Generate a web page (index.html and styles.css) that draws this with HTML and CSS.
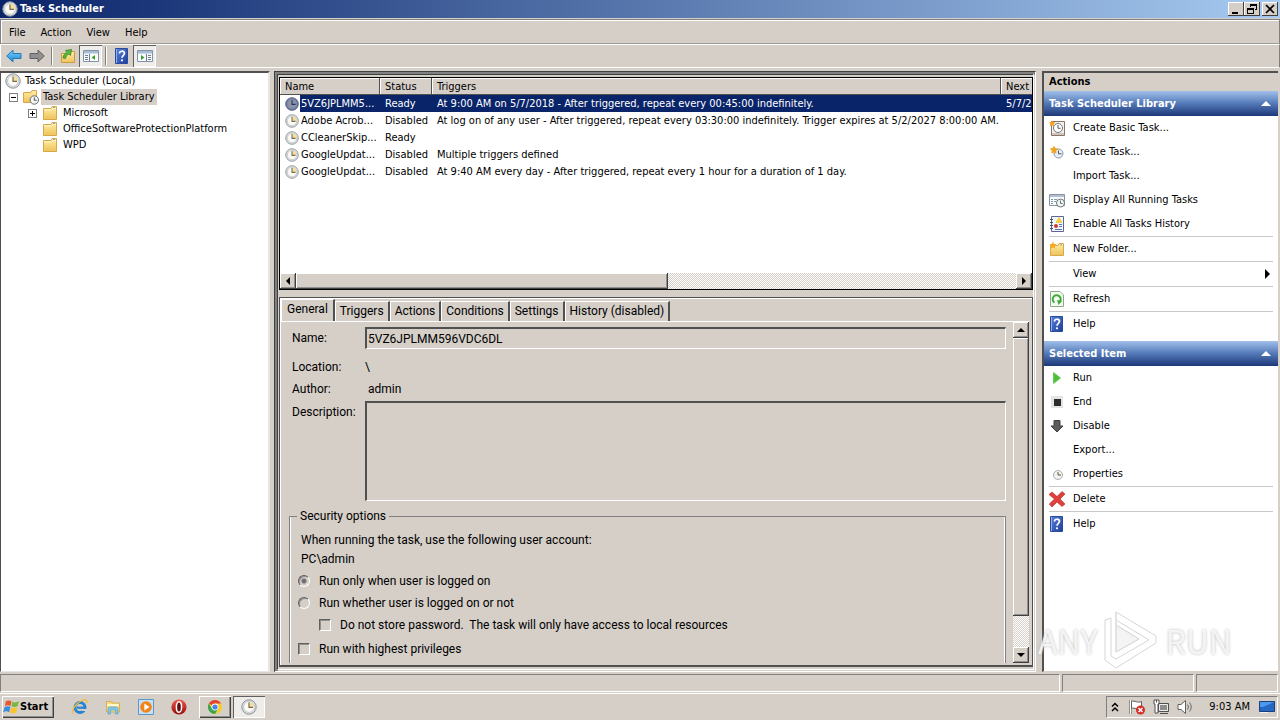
FILE: index.html
```html
<!DOCTYPE html>
<html lang="en">
  <head>
    <title>Task Scheduler</title>
    <meta charset="utf-8"/>
    <meta name="viewport" content="width=device-width, initial-scale=1"/>
    <link rel="stylesheet" href="styles.css">
  </head>
  <body>
    <!-- icon set -->
    <svg class="sprite" aria-hidden="true">
      <defs>
        <linearGradient id="g-folder" x1="0" y1="0" x2="0" y2="1"><stop offset="0" stop-color="#ffeea6"/><stop offset="1" stop-color="#eec35a"/></linearGradient>
        <linearGradient id="g-help" x1="0" y1="0" x2="1" y2="1"><stop offset="0" stop-color="#5b86dc"/><stop offset="1" stop-color="#1c3c9c"/></linearGradient>
        <linearGradient id="g-blue" x1="0" y1="0" x2="0" y2="1"><stop offset="0" stop-color="#7fd0f8"/><stop offset="1" stop-color="#1c86cc"/></linearGradient>
        <linearGradient id="g-red" x1="0" y1="0" x2="0" y2="1"><stop offset="0" stop-color="#ee5a50"/><stop offset="1" stop-color="#960c0c"/></linearGradient>
      </defs>
      <symbol id="clock" viewBox="0 0 16 16">
        <circle cx="8" cy="8" r="7.2" fill="#dfe2e4" stroke="#8d9298"/>
        <circle cx="8" cy="8" r="5.4" fill="#fafaf6" stroke="#b4b8bc" stroke-width=".7"/>
        <path d="M8 8V2.8A5.2 5.2 0 0 1 13.2 8z" fill="#f4dfa0"/>
        <path d="M8 3.4V8.4H12" fill="none" stroke="#7a6a4c" stroke-width="1.2"/>
      </symbol>
      <symbol id="clock-selected" viewBox="0 0 16 16">
        <circle cx="8" cy="8" r="7.2" fill="#7480a0" stroke="#48557c"/>
        <circle cx="8" cy="8" r="5.2" fill="#8a93aa"/>
        <path d="M8 3.4V8.4H12" fill="none" stroke="#28345c" stroke-width="1.2"/>
      </symbol>
      <symbol id="folder" viewBox="0 0 16 16">
        <path d="M1.5 3.5H9L10 1.5H14.5V14.5H1.5z" fill="url(#g-folder)" stroke="#d9a84a"/>
        <path d="M2 5H10L11 3.5H14" fill="none" stroke="#fff6cc"/>
        <path d="M11 2.5h2" stroke="#6aa7d0"/>
      </symbol>
      <symbol id="folder-clock" viewBox="0 0 16 16">
        <path d="M.5 3.5H8L9 1.5H13.5V13.5H.5z" fill="url(#g-folder)" stroke="#d9a84a"/>
        <circle cx="11.3" cy="11" r="4.2" fill="#f4f4f0" stroke="#666c72"/>
        <path d="M11.3 8.4V11.3H13.6" fill="none" stroke="#555"/>
      </symbol>
      <symbol id="folder-up" viewBox="0 0 16 16">
        <path d="M1.5 5.5H8L9 3.5H14.5V14.5H1.5z" fill="url(#g-folder)" stroke="#d09a3c"/>
        <path d="M3 10C3 7 5 5.5 7 4.5L5.5 2.5 11.5 1.5 10.5 7.5 9 6C7 7 6 8 5.5 10.5z" fill="#58b93a" stroke="#2f7d1c" stroke-width=".7"/>
      </symbol>
      <symbol id="folder-new" viewBox="0 0 16 16">
        <path d="M1.5 4.5H9L10 2.5H14.5V14.5H1.5z" fill="url(#g-folder)" stroke="#d9a84a"/>
        <path d="M4 .5L5.1 2.9 7.7 3.3 5.8 5.1 6.3 7.7 4 6.4 1.7 7.7 2.2 5.1.3 3.3 2.9 2.9z" fill="#f7a81c"/>
        <path d="M11 4h2" stroke="#6aa7d0"/>
      </symbol>
      <symbol id="back" viewBox="0 0 16 16"><path d="M.7 8L7 2V5.5H15V10.5H7V14z" fill="url(#g-blue)" stroke="#1d7cc0"/></symbol>
      <symbol id="forward" viewBox="0 0 16 16"><path d="M15.3 8L9 2V5.5H1V10.5H9V14z" fill="#909090" stroke="#606060"/></symbol>
      <symbol id="pane-left" viewBox="0 0 16 16">
        <path d="M.5 2.5h15v11H.5z" fill="#f8fafc" stroke="#8492a8"/><path d="M1 3h14v2.5H1z" fill="#a9bcd6"/>
        <path d="M6.5 6v7M2 7.5h3M2 9.5h3M2 11.5h3" stroke="#6c7c94"/><path d="M12 7v5L8.5 9.5z" fill="#3aa02c"/>
      </symbol>
      <symbol id="pane-right" viewBox="0 0 16 16">
        <path d="M.5 2.5h15v11H.5z" fill="#f8fafc" stroke="#8492a8"/><path d="M1 3h14v2.5H1z" fill="#a9bcd6"/>
        <path d="M9.5 6v7M11 7.5h3M11 9.5h3M11 11.5h3" stroke="#6c7c94"/><path d="M4 7v5L7.5 9.5z" fill="#3aa02c"/>
      </symbol>
      <symbol id="help" viewBox="0 0 16 16">
        <path d="M1.5.5h12v15h-12z" fill="url(#g-help)" stroke="#2b4a9c"/>
        <path d="M2.5 1v14" stroke="#8fb0ee"/>
        <path d="M5.5 5.5C5.5 2.5 10.5 2.5 10.5 5.3 10.5 7.3 8 7.3 8 9.8" fill="none" stroke="#fff" stroke-width="1.7"/><circle cx="8" cy="12.3" r="1.1" fill="#fff"/>
      </symbol>
      <symbol id="basic-task" viewBox="0 0 16 16">
        <path d="M2.5 1.5h13v14h-13z" fill="#f2efec" stroke="#8a7468"/><path d="M3 14h12" stroke="#a89c94"/>
        <circle cx="9" cy="8" r="4.5" fill="#fff" stroke="#70767c"/><path d="M9 5V8.3H11.5" fill="none" stroke="#555"/>
        <path d="M3 0L4 2 6.4 2.4 4.7 4 5 6.4 3 5.2 1 6.4 1.3 4 0 2.4 2 2z" fill="#f4a01c"/>
      </symbol>
      <symbol id="new-task" viewBox="0 0 16 16">
        <circle cx="9.5" cy="9.5" r="4.5" fill="#e4edf8" stroke="#8c98a8"/><path d="M9.5 6.5V9.8H12.5" fill="none" stroke="#4a5870"/>
        <path d="M5 2.5L6 4.5 8.500 5 6.8 6.600 7 9 5 7.8 3 9 3.2 6.6 1.500 5 4 4.5z" fill="#f2a51c" stroke="#f2a51c"/>
      </symbol>
      <symbol id="running" viewBox="0 0 16 16">
        <path d="M.5 2.5h15v11H.5z" fill="#fafbfc" stroke="#8794a0"/><path d="M1 3h14v2H1z" fill="#b2bfd0"/>
        <path d="M2 7.5h2M5 7.5h3M2 9.5h2M5 9.5h2M2 11.5h2" stroke="#7d97ab"/>
        <circle cx="11.5" cy="11" r="4" fill="#f4f6f4" stroke="#6c7478"/><path d="M11.5 8.5v3h2" fill="none" stroke="#4a7c74"/>
      </symbol>
      <symbol id="history" viewBox="0 0 16 16">
        <path d="M2.5.5h12v15h-12z" fill="#f4f6fc" stroke="#5c6890"/>
        <path d="M1 3.5h3M1 6.5h3M1 9.5h3M1 12.5h3" stroke="#444c68"/>
        <path d="M10 1.5l3 5H7z" fill="#ffd428" stroke="#e0b010" stroke-width=".5"/>
        <circle cx="7" cy="10" r="2" fill="#d23a30"/><path d="M10 8.5h3M10 10.5h3M6 13.5h7" stroke="#5a74b0"/>
      </symbol>
      <symbol id="refresh" viewBox="0 0 16 16">
        <path d="M1.5.5H11L14.5 4V15.5H1.5z" fill="#f4faf2" stroke="#90a88c"/>
        <path d="M5.5 11.5A4 4 0 1 1 10.5 11" fill="none" stroke="#3eaa38" stroke-width="2"/><path d="M8 9l5 1-3.5 4z" fill="#3eaa38"/>
      </symbol>
      <symbol id="run" viewBox="0 0 16 16"><path d="M4.5 2.5L11.5 8 4.5 13.5z" fill="#4cc232" stroke="#6fc860"/></symbol>
      <symbol id="end" viewBox="0 0 16 16"><path d="M2 2h12v12H2z" fill="#e4e4e4"/><path d="M5 5h7v7H5z" fill="#2c2c2c"/></symbol>
      <symbol id="disable" viewBox="0 0 16 16"><path d="M5 2.5h6V8h3L8 14 2 8h3z" fill="#5c5c5c" stroke="#404040"/></symbol>
      <symbol id="properties" viewBox="0 0 16 16">
        <circle cx="9" cy="9" r="4.5" fill="#f4f4f2" stroke="#a8acb0"/><path d="M9 6v3h3" fill="none" stroke="#5e5040"/>
      </symbol>
      <symbol id="delete" viewBox="0 0 16 16"><path d="M3 1L8 5.5 13 .5 16 3 11 8 16 13 13 15.5 8 11 3 16 .3 13 5.5 8 0 3.5z" fill="#e0403c" stroke="#b42424" stroke-width=".6"/></symbol>
      <symbol id="windows" viewBox="0 0 18 16">
        <path d="M3 2C5 .7 7 1 9 2L8 7C6 6 4 6 2 7z" fill="#e8582c"/><path d="M10 2.5C12 3.5 14 3.5 17 2L15.5 7C13 8.5 11 8 9 7.3z" fill="#78b83c"/>
        <path d="M1.8 8C4 7 6 7 7.8 8L6.5 13.5C4 12 2 12.5 0 13.5z" fill="#3c8cdc"/><path d="M8.7 8.5C11 9.5 13 9 15.2 8.2L14 13.5C12 15 9.5 15 7.5 14z" fill="#fcc428"/>
      </symbol>
      <symbol id="ie" viewBox="0 0 16 16">
        <circle cx="8" cy="8.5" r="5" fill="none" stroke="#2684d4" stroke-width="3"/><path d="M5 8.7h9" stroke="#2684d4" stroke-width="2.2"/><path d="M10 10h5v2h-5z" fill="#d5cfc8"/>
        <path d="M1.5 14.5C-1 11 4 4 10 1.5 13.5 0 15.8 1 14.5 4" fill="none" stroke="#f2bc2c" stroke-width="1.3"/>
      </symbol>
      <symbol id="explorer" viewBox="0 0 16 16">
        <path d="M1.5 2.5H6l1 1.5h7.5v9h-13z" fill="#f4dc84" stroke="#d8b04c"/><path d="M2 6h12" stroke="#fff8d0" stroke-width="2"/>
        <path d="M3 15V9.5C3 8.5 4 8 5 8h6c1 0 2 .5 2 1.5V15h-2.5v-4h-5v4z" fill="#82c6ea" stroke="#4c9cc8" stroke-width=".6"/>
      </symbol>
      <symbol id="player" viewBox="0 0 16 16">
        <path d="M.5.5h15v15H.5z" fill="#c8e0f4" stroke="#5898cc"/><circle cx="8" cy="8" r="5.8" fill="#f08418"/><path d="M6.3 4.5L11.5 8 6.3 11.5z" fill="#fff"/>
      </symbol>
      <symbol id="opera" viewBox="0 0 16 16">
        <circle cx="8" cy="8" r="7.6" fill="url(#g-red)"/><ellipse cx="8" cy="8" rx="2.6" ry="5.3" fill="#641010" stroke="#fff" stroke-width="1.5"/>
      </symbol>
      <symbol id="chrome" viewBox="0 0 16 16">
        <circle cx="8" cy="8" r="7" fill="#f8cc30"/><path d="M8 8L1.9 4.5A7 7 0 0 1 14.1 4.5H8z" fill="#e04434"/><path d="M1.9 4.5A7 7 0 0 0 8 15L11 9.7 8 8 5 9.7z" fill="#38a454"/>
        <circle cx="8" cy="8" r="3.4" fill="#fff"/><circle cx="8" cy="8" r="2.6" fill="#4484ec"/>
      </symbol>
      <symbol id="flag" viewBox="0 0 16 16">
        <path d="M1.5 1v14" stroke="#505050" stroke-width="2"/><path d="M1.5 1v14" stroke="#fff"/><path d="M2.5 2.5C6 1 8 4.5 12.5 2.5v7C8 11.5 6 8 2.5 9.5z" fill="#fff" stroke="#606060"/>
        <circle cx="11.5" cy="11" r="4.5" fill="#d42c24"/><path d="M9.5 9l4 4m0-4l-4 4" stroke="#fff" stroke-width="1.5"/>
      </symbol>
      <symbol id="network" viewBox="0 0 16 16">
        <path d="M5.5 4.5h10v8h-10z" fill="#8c8c88" stroke="#505050"/><path d="M6.5 5.5h8v6h-8z" fill="none" stroke="#eee"/><path d="M7 14.5h8" stroke="#505050"/>
        <path d="M1 1h5v4H5v9H2V5H1z" fill="#fff" stroke="#505050"/><path d="M3.5 1v2.5" stroke="#505050"/>
      </symbol>
      <symbol id="speaker" viewBox="0 0 16 16">
        <path d="M1 5.5h3L8.5 1.5v13L4 10.5H1z" fill="#fff" stroke="#606060"/>
        <path d="M10.5 5.5q2 2.5 0 5M12.5 3.5q3.5 4.5 0 9" fill="none" stroke="#686868"/>
      </symbol>
      <symbol id="desktop" viewBox="0 0 16 16">
        <path d="M.5 2.5h15v10H.5z" fill="#2468c4" stroke="#1c3c7c"/><path d="M1 3h14L4 8H1z" fill="#4c98ec"/><path d="M1 13.5h8" stroke="#eaf4ff"/>
      </symbol>
      <symbol id="chevron" viewBox="0 0 8 10"><path d="M1 4.5L4 1.5 7 4.5M1 9L4 6 7 9" fill="none" stroke="#000" stroke-width="1.5"/></symbol>
      <symbol id="tri-up" viewBox="0 0 8 4"><path d="M0 4h8L4 0z" fill="currentColor"/></symbol>
      <symbol id="tri-right" viewBox="0 0 4 8"><path d="M0 0v8l4-4z" fill="currentColor"/></symbol>
      <symbol id="win-min" viewBox="0 0 10 10"><path d="M1 8h6v2H1z"/></symbol>
      <symbol id="win-restore" viewBox="0 0 10 10"><path d="M3 0h7v6H8V5h1V2H4v1H3zM0 4h7v6H0zM1 6v3h5V6z" fill-rule="evenodd"/></symbol>
      <symbol id="win-close" viewBox="0 0 10 10"><path d="M1 1l8 8M9 1L1 9" stroke="#000" stroke-width="1.7"/></symbol>
    </svg>

    <header class="titlebar">
      <svg class="icon"><use href="#clock"/></svg>
      <h1>Task Scheduler</h1>
      <div class="window-buttons">
        <button aria-label="Minimize"><svg><use href="#win-min"/></svg></button>
        <button aria-label="Restore"><svg><use href="#win-restore"/></svg></button>
        <button class="close" aria-label="Close"><svg><use href="#win-close"/></svg></button>
      </div>
    </header>

    <nav class="menubar">
      <button>File</button>
      <button>Action</button>
      <button>View</button>
      <button>Help</button>
    </nav>

    <div class="toolbar">
      <button aria-label="Back"><svg class="icon"><use href="#back"/></svg></button>
      <button aria-label="Forward"><svg class="icon"><use href="#forward"/></svg></button>
      <span class="divider"></span>
      <button aria-label="Up one level"><svg class="icon"><use href="#folder-up"/></svg></button>
      <button class="pressed" aria-label="Console tree"><svg class="icon"><use href="#pane-left"/></svg></button>
      <span class="divider"></span>
      <button aria-label="Help"><svg class="icon"><use href="#help"/></svg></button>
      <button class="pressed" aria-label="Action pane"><svg class="icon"><use href="#pane-right"/></svg></button>
    </div>

    <main class="console">
      <section class="tree">
        <ul>
          <li class="node root"><svg class="icon"><use href="#clock"/></svg><span>Task Scheduler (Local)</span></li>
          <li class="node library"><i class="toggle minus"></i><svg class="icon"><use href="#folder-clock"/></svg><span class="current">Task Scheduler Library</span></li>
          <li class="node child"><i class="toggle plus"></i><svg class="icon"><use href="#folder"/></svg><span>Microsoft</span></li>
          <li class="node child"><i class="toggle none"></i><svg class="icon"><use href="#folder"/></svg><span>OfficeSoftwareProtectionPlatform</span></li>
          <li class="node child"><i class="toggle none"></i><svg class="icon"><use href="#folder"/></svg><span>WPD</span></li>
        </ul>
      </section>

      <section class="center">
        <div class="task-list">
          <div class="task-scroll">
            <table>
              <colgroup><col class="c-name"><col class="c-status"><col class="c-triggers"><col class="c-next"></colgroup>
              <thead>
                <tr><th>Name</th><th>Status</th><th>Triggers</th><th>Next</th></tr>
              </thead>
              <tbody>
                <tr class="selected"><td><div class="task"><svg><use href="#clock-selected"/></svg><span>5VZ6JPLMM5...</span></div></td><td>Ready</td><td>At 9:00 AM on 5/7/2018 - After triggered, repeat every 00:45:00 indefinitely.</td><td>5/7/2</td></tr>
                <tr><td><div class="task"><svg><use href="#clock"/></svg><span>Adobe Acrob...</span></div></td><td>Disabled</td><td>At log on of any user - After triggered, repeat every 03:30:00 indefinitely. Trigger expires at 5/2/2027 8:00:00 AM.</td><td></td></tr>
                <tr><td><div class="task"><svg><use href="#clock"/></svg><span>CCleanerSkip...</span></div></td><td>Ready</td><td></td><td></td></tr>
                <tr><td><div class="task"><svg><use href="#clock"/></svg><span>GoogleUpdat...</span></div></td><td>Disabled</td><td>Multiple triggers defined</td><td></td></tr>
                <tr><td><div class="task"><svg><use href="#clock"/></svg><span>GoogleUpdat...</span></div></td><td>Disabled</td><td>At 9:40 AM every day - After triggered, repeat every 1 hour for a duration of 1 day.</td><td></td></tr>
              </tbody>
            </table>
          </div>
          <div class="scrollbar horizontal">
            <button class="left" aria-label="Scroll left"><svg><use href="#tri-right"/></svg></button>
            <div class="thumb"></div>
            <div class="track"></div>
            <button aria-label="Scroll right"><svg><use href="#tri-right"/></svg></button>
          </div>
        </div>

        <div class="details">
          <div class="tabs" role="tablist">
            <button role="tab" class="active" aria-selected="true">General</button>
            <button role="tab">Triggers</button>
            <button role="tab">Actions</button>
            <button role="tab">Conditions</button>
            <button role="tab">Settings</button>
            <button role="tab">History (disabled)</button>
          </div>
          <div class="tab-page">
            <form class="general">
              <div class="field name">
                <label for="name">Name:</label>
                <input id="name" type="text" value="5VZ6JPLMM596VDC6DL" readonly>
              </div>
              <div class="field"><span class="caption">Location:</span><span>\</span></div>
              <div class="field"><span class="caption">Author:</span><span class="value">admin</span></div>
              <div class="field description">
                <label for="description">Description:</label>
                <textarea id="description" readonly></textarea>
              </div>
              <fieldset>
                <legend>Security options</legend>
                <p>When running the task, use the following user account:</p>
                <p>PC\admin</p>
                <label class="option"><input type="radio" name="logon" checked>Run only when user is logged on</label>
                <label class="option"><input type="radio" name="logon">Run whether user is logged on or not</label>
                <label class="option nested"><input type="checkbox">Do not store password.&nbsp; The task will only have access to local resources</label>
                <label class="option last"><input type="checkbox">Run with highest privileges</label>
              </fieldset>
            </form>
            <div class="scrollbar vertical">
              <button aria-label="Scroll up"><svg><use href="#tri-up"/></svg></button>
              <div class="thumb"></div>
              <div class="track"></div>
              <button class="down" aria-label="Scroll down"><svg><use href="#tri-up"/></svg></button>
            </div>
          </div>
        </div>
      </section>

      <aside class="actions">
        <h2>Actions</h2>
        <h3>Task Scheduler Library<svg><use href="#tri-up"/></svg></h3>
        <div class="group">
          <button><svg class="icon"><use href="#basic-task"/></svg>Create Basic Task...</button>
          <button><svg class="icon"><use href="#new-task"/></svg>Create Task...</button>
          <button><i class="icon"></i>Import Task...</button>
          <button><svg class="icon"><use href="#running"/></svg>Display All Running Tasks</button>
          <button><svg class="icon"><use href="#history"/></svg>Enable All Tasks History</button>
          <hr>
          <button><svg class="icon"><use href="#folder-new"/></svg>New Folder...</button>
          <hr>
          <button><i class="icon"></i>View<svg class="more"><use href="#tri-right"/></svg></button>
          <hr>
          <button><svg class="icon"><use href="#refresh"/></svg>Refresh</button>
          <hr>
          <button><svg class="icon"><use href="#help"/></svg>Help</button>
        </div>
        <h3>Selected Item<svg><use href="#tri-up"/></svg></h3>
        <div class="group">
          <button><svg class="icon"><use href="#run"/></svg>Run</button>
          <button><svg class="icon"><use href="#end"/></svg>End</button>
          <button><svg class="icon"><use href="#disable"/></svg>Disable</button>
          <button><i class="icon"></i>Export...</button>
          <button><svg class="icon"><use href="#properties"/></svg>Properties</button>
          <hr>
          <button><svg class="icon"><use href="#delete"/></svg>Delete</button>
          <hr>
          <button><svg class="icon"><use href="#help"/></svg>Help</button>
        </div>
      </aside>
    </main>

    <footer class="statusbar"><span></span><span></span><span></span></footer>

    <div class="taskbar">
      <button class="start"><svg><use href="#windows"/></svg>Start</button>
      <div class="quick">
        <button aria-label="Internet Explorer"><svg class="icon"><use href="#ie"/></svg></button>
        <button aria-label="Explorer"><svg class="icon"><use href="#explorer"/></svg></button>
        <button aria-label="Media Player"><svg class="icon"><use href="#player"/></svg></button>
        <button aria-label="Opera"><svg class="icon"><use href="#opera"/></svg></button>
      </div>
      <div class="windows">
        <button aria-label="Chrome"><svg class="icon"><use href="#chrome"/></svg></button>
        <button class="pressed" aria-label="Task Scheduler"><svg class="icon"><use href="#clock"/></svg></button>
      </div>
      <div class="tray">
        <svg class="chevron"><use href="#chevron"/></svg>
        <svg class="icon"><use href="#flag"/></svg>
        <svg class="icon"><use href="#network"/></svg>
        <svg class="icon"><use href="#speaker"/></svg>
        <time>9:03 AM</time>
        <svg class="icon"><use href="#desktop"/></svg>
      </div>
    </div>

    <div class="watermark">
      <span>ANY</span>
      <svg viewBox="0 0 60 64">
        <path d="M15 4L55 28V35L15 60 4 52V12L10 10V48L15 51 48 32 15 12z" fill="#fff" fill-opacity=".8" stroke="#d6d6d6"/>
        <path d="M15 17V44L38 31z" fill="#f4f4f4" stroke="#d0d0d0"/>
        <path d="M15 4V44" stroke="#e2e2e2" stroke-width="2"/>
      </svg>
      <span>RUN</span>
    </div>
  </body>
</html>
```
FILE: styles.css
```css
* {box-sizing: border-box;}
html {height: 100%;}
body {
  display: flex;
  flex-direction: column;
  height: 100%;
  margin: 0;
  overflow: hidden;
  position: relative;
  background: #d5cfc8;
  color: #000;
  font: 11px/16px "Tahoma", "DejaVu Sans Condensed", sans-serif;
}

h1, h2, h3, p, ul {margin: 0; padding: 0;}
h1, h2, h3 {font-size: 11px; font-weight: bold;}
button {
  border: none;
  padding: 0;
  background: transparent;
  color: inherit;
  font: inherit;
}
svg {display: block; flex: none;}
.sprite {position: absolute; width: 0; height: 0;}
.icon {width: 16px; height: 16px; flex: none;}

/* title bar */
.titlebar {
  display: flex;
  align-items: center;
  flex: none;
  height: 18px;
  padding: 0 2px;
  gap: 2px;
  background: linear-gradient(90deg, #0a246a, #a6caf0);
  color: white;
}
.window-buttons {display: flex; margin-left: auto;}
.window-buttons button {
  display: grid;
  place-items: center;
  width: 16px;
  height: 14px;
  background: #d5cfc8;
  box-shadow: inset -1px -1px #404040, inset 1px 1px white;
}
.window-buttons .close {margin-left: 2px;}
.window-buttons svg {width: 10px; height: 10px;}

.menubar {
  display: flex;
  flex: none;
  height: 25px;
  margin-top: 1px;
  padding: 2px 3px 0 2px;
  border: 1px solid #808080;
  border-bottom-color: #a09c94;
  box-shadow: inset 1px 1px white;
}
.menubar button {padding: 0 6px; margin-right: 3px;}

.toolbar {
  display: flex;
  align-items: center;
  flex: none;
  height: 24px;
  padding: 0 1px;
  border: 1px solid white;
  border-right-color: #808080;
}
.toolbar button {
  display: grid;
  place-items: center;
  width: 23px;
  height: 22px;
}
.toolbar .pressed, .windows .pressed {
  background: #efede9;
  box-shadow: inset 1px 1px #606060, inset -1px -1px white;
}
.toolbar .divider {
  width: 2px;
  height: 18px;
  margin: 0 3px;
  border-left: 1px solid #808080;
  border-right: 1px solid white;
}

/* three panes */
.console {
  display: flex;
  flex: 1;
  min-height: 0;
  margin-top: 3px;
  padding-right: 2px;
}

.tree {
  flex: none;
  width: 270px;
  background: white;
  border: 2px solid #505050;
  border-width: 2px 2px 1px 1px;
  border-right-color: #e8e6e2;
  border-bottom-color: #e8e6e2;
}
.tree ul {list-style: none;}
.node {display: flex; align-items: center; height: 16px;}
.node span {padding: 0 2px; margin-left: 2px;}
.root {padding-left: 4px;}
.library {padding-left: 8px;}
.child {padding-left: 27px;}
.library .icon, .child .icon {margin-left: 5px;}
.child span {margin-left: 3px;}
.toggle {
  width: 9px;
  height: 9px;
  border: 1px solid #808080;
  background: linear-gradient(black, black) center / 5px 1px no-repeat;
}
.node .current {background: #d5cfc8;}
.toggle.plus {
  background: linear-gradient(black, black) center / 5px 1px no-repeat,
    linear-gradient(black, black) center / 1px 5px no-repeat;
}
.toggle.none {visibility: hidden;}

.center {
  display: flex;
  flex-direction: column;
  flex: 1;
  min-width: 0;
  margin: 0 6px 0 4px;
  padding: 2px 0 2px 1px;
  border: 4px double #404040;
  border-width: 4px 3px 3px 4px;
  border-right-color: white;
  border-bottom-color: white;
  background: linear-gradient(#808080, #808080) 0 0 / 4px 100% no-repeat border-box,
    linear-gradient(#808080, #808080) 0 0 / 100% 4px no-repeat border-box;
}

.task-list {
  display: flex;
  flex-direction: column;
  flex: none;
  height: 213px;
  border: 1px solid black;
  background: white;
}
.task-scroll {flex: 1; overflow: hidden;}
table {
  width: 820px;
  table-layout: fixed;
  border-collapse: collapse;
}
.c-name {width: 100px;}
.c-status {width: 52px;}
.c-triggers {width: 569px;}
th, td {
  height: 17px;
  padding: 0 5px;
  line-height: 17px;
  text-align: left;
  font-weight: normal;
  white-space: nowrap;
}
th {
  background: #d5cfc8;
  box-shadow: inset -1px -1px #505050, inset 1px 1px white;
}
td {padding-right: 0; overflow: hidden;}
.selected td {background: #0a246a; color: white;}
.selected td:first-child {background: linear-gradient(90deg, white 20px, #0a246a 20px);}
.task {display: flex; align-items: center; gap: 2px;}
.task svg {width: 14px; height: 14px;}

.scrollbar {
  display: flex;
  flex: none;
  background: repeating-conic-gradient(#fff 0 25%, #d5cfc8 0 50%) 0 0 / 2px 2px;
}
.scrollbar button, .scrollbar .thumb {
  background: #d5cfc8;
  box-shadow: inset -1px -1px #404040, inset 1px 1px white, inset -2px -2px #909090;
}
.scrollbar button {
  display: grid;
  place-items: center;
  flex: none;
  width: 16px;
  height: 16px;
}
.horizontal .thumb {flex: 31;}
.horizontal .track {flex: 29;}
.horizontal svg {width: 4px; height: 8px;}
.vertical {flex-direction: column; width: 16px;}
.vertical .thumb {flex: 9;}
.vertical .track {flex: 1;}
.vertical svg {width: 8px; height: 4px;}
.left svg, .down svg {transform: rotate(180deg);}

/* task details */
.details {
  display: flex;
  flex-direction: column;
  flex: 1;
  min-height: 0;
  margin-top: 7px;
  padding: 1px 3px 2px 0;
  border: 1px solid #505050;
  border-bottom-width: 2px;
  box-shadow: inset 1px 1px white;
  font: 12px/16px "Segoe UI", Roboto, sans-serif;
}
.tabs {
  display: flex;
  align-items: flex-end;
  flex: none;
  height: 22px;
  padding-left: 1px;
}
.tabs button {
  height: 20px;
  padding: 0 4px 1px 4px;
  white-space: nowrap;
  border-right: 2px solid #505050;
  border-top: 1px solid white;
  border-left: 1px solid white;
}
.tabs .active {height: 22px; padding: 0 5px 4px 5px;}
.tab-page {
  display: flex;
  flex: 1;
  min-height: 0;
  border-top: 1px solid white;
}
.general {
  flex: 1;
  min-width: 0;
  overflow: hidden;
  padding: 5px 7px 0 9px;
}
.field {display: flex; align-items: center; height: 22px;}
.field label, .field .caption {width: 76px; padding-left: 3px; flex: none;}
.field .value {padding-left: 3px;}
.field input, .field textarea {
  flex: 1;
  min-width: 0;
  margin: 0;
  padding: 0 1px;
  background: transparent;
  border: 1px solid white;
  border-width: 2px 1px 1px 2px;
  border-top-color: #505050;
  border-left-color: #505050;
  border-radius: 0;
  font: inherit;
  color: inherit;
  resize: none;
  outline: none;
}
.name {margin-bottom: 7px;}
.name input {height: 22px;}
.description {height: 100px; align-items: flex-start; margin-top: 1px;}
.description label {padding-top: 3px;}
.description textarea {height: 100px;}

fieldset {
  margin: 7px 0 0 0;
  padding: 8px 9px 20px 8px;
  border: 1px solid #808080;
  box-shadow: inset 1px 0 white, inset -1px 0 white;
}
legend {padding: 0 3px; margin-left: -1px;}
fieldset p {height: 19px; padding-left: 3px;}
.option {display: flex; align-items: center; height: 22px;}
.option input {
  appearance: none;
  flex: none;
  width: 12px;
  height: 12px;
  margin: 0 9px 0 0;
  border: 1px solid white;
  border-top-color: #606060;
  border-left-color: #606060;
  box-shadow: inset 1px 1px #909090;
}
.option input[type=radio] {border-radius: 50%;}
.option input[type=radio]:checked {background: radial-gradient(#707070 2px, transparent 3px);}
.nested {padding-left: 21px;}
.last {margin-top: 2px;}

/* actions pane */
.actions {
  flex: none;
  width: 236px;
  border: 1px solid #505050;
  border-width: 2px 0 1px 2px;
  border-bottom-color: #d5cfc8;
  background: white;
}
.actions h2 {
  height: 18px;
  padding-left: 5px;
  line-height: 18px;
  background: #d5cfc8;
}
.actions h3 {
  display: flex;
  align-items: center;
  justify-content: space-between;
  height: 25px;
  padding: 0 7px 0 5px;
  background: linear-gradient(#a0c0ea, #5479b8 50%, #1d3878);
  color: white;
}
.actions h3 svg {width: 10px; height: 5px;}
.group {padding: 0 5px; margin-bottom: 5px;}
.group button {
  display: flex;
  align-items: center;
  gap: 8px;
  width: 100%;
  height: 24px;
}
.group hr {
  height: 1px;
  margin: 0;
  border: none;
  background: #c8c8c4;
}
.group .more {width: 5px; height: 10px; margin-left: auto; margin-right: 3px;}

/* bottom bars */
.statusbar {
  display: flex;
  gap: 2px;
  flex: none;
  height: 21px;
  padding: 2px 2px 1px 0;
}
.statusbar span {
  border: 1px solid white;
  border-top-color: #808080;
  border-left-color: #808080;
}
.statusbar span:nth-child(1) {flex: 1;}
.statusbar span:nth-child(2) {width: 132px;}
.statusbar span:nth-child(3) {width: 82px;}

.taskbar {
  display: flex;
  align-items: center;
  flex: none;
  height: 27px;
  padding: 0 2px;
  border-top: 1px solid white;
}
.taskbar button {
  display: grid;
  place-items: center;
}
.taskbar .start {
  display: flex;
  gap: 0;
  width: 52px;
  height: 22px;
  padding-left: 1px;
  font-weight: bold;
}
.start svg {width: 17px; height: 16px;}
.start, .windows button {box-shadow: inset 1px 1px white, inset -1px -1px #404040, inset -2px -2px #909090;}
.quick {display: flex; gap: 10px; margin: 0 8px 0 14px;}
.quick button {width: 23px; height: 22px;}
.windows {display: flex; gap: 2px; margin-left: 1px;}
.windows button {width: 32px; height: 22px;}
.tray {
  display: flex;
  align-items: center;
  gap: 8px;
  height: 22px;
  margin-left: auto;
  padding: 0 2px 0 4px;
  border: 1px solid white;
  border-top-color: #808080;
  border-left-color: #808080;
}
.tray time {padding: 0 1px 0 8px;}
.tray .chevron {width: 8px; height: 10px; margin-right: 2px;}

.watermark {
  position: absolute;
  right: 48px;
  bottom: 48px;
  display: flex;
  align-items: center;
  gap: 4px;
  color: rgba(255, 255, 255, 0.8);
  font: 32px/64px "Liberation Sans Narrow", "Noto Sans CJK SC", sans-serif;
  text-shadow: 0 0 3px #b8b8b8;
  pointer-events: none;
}
.watermark svg {width: 60px; height: 64px;}
```
